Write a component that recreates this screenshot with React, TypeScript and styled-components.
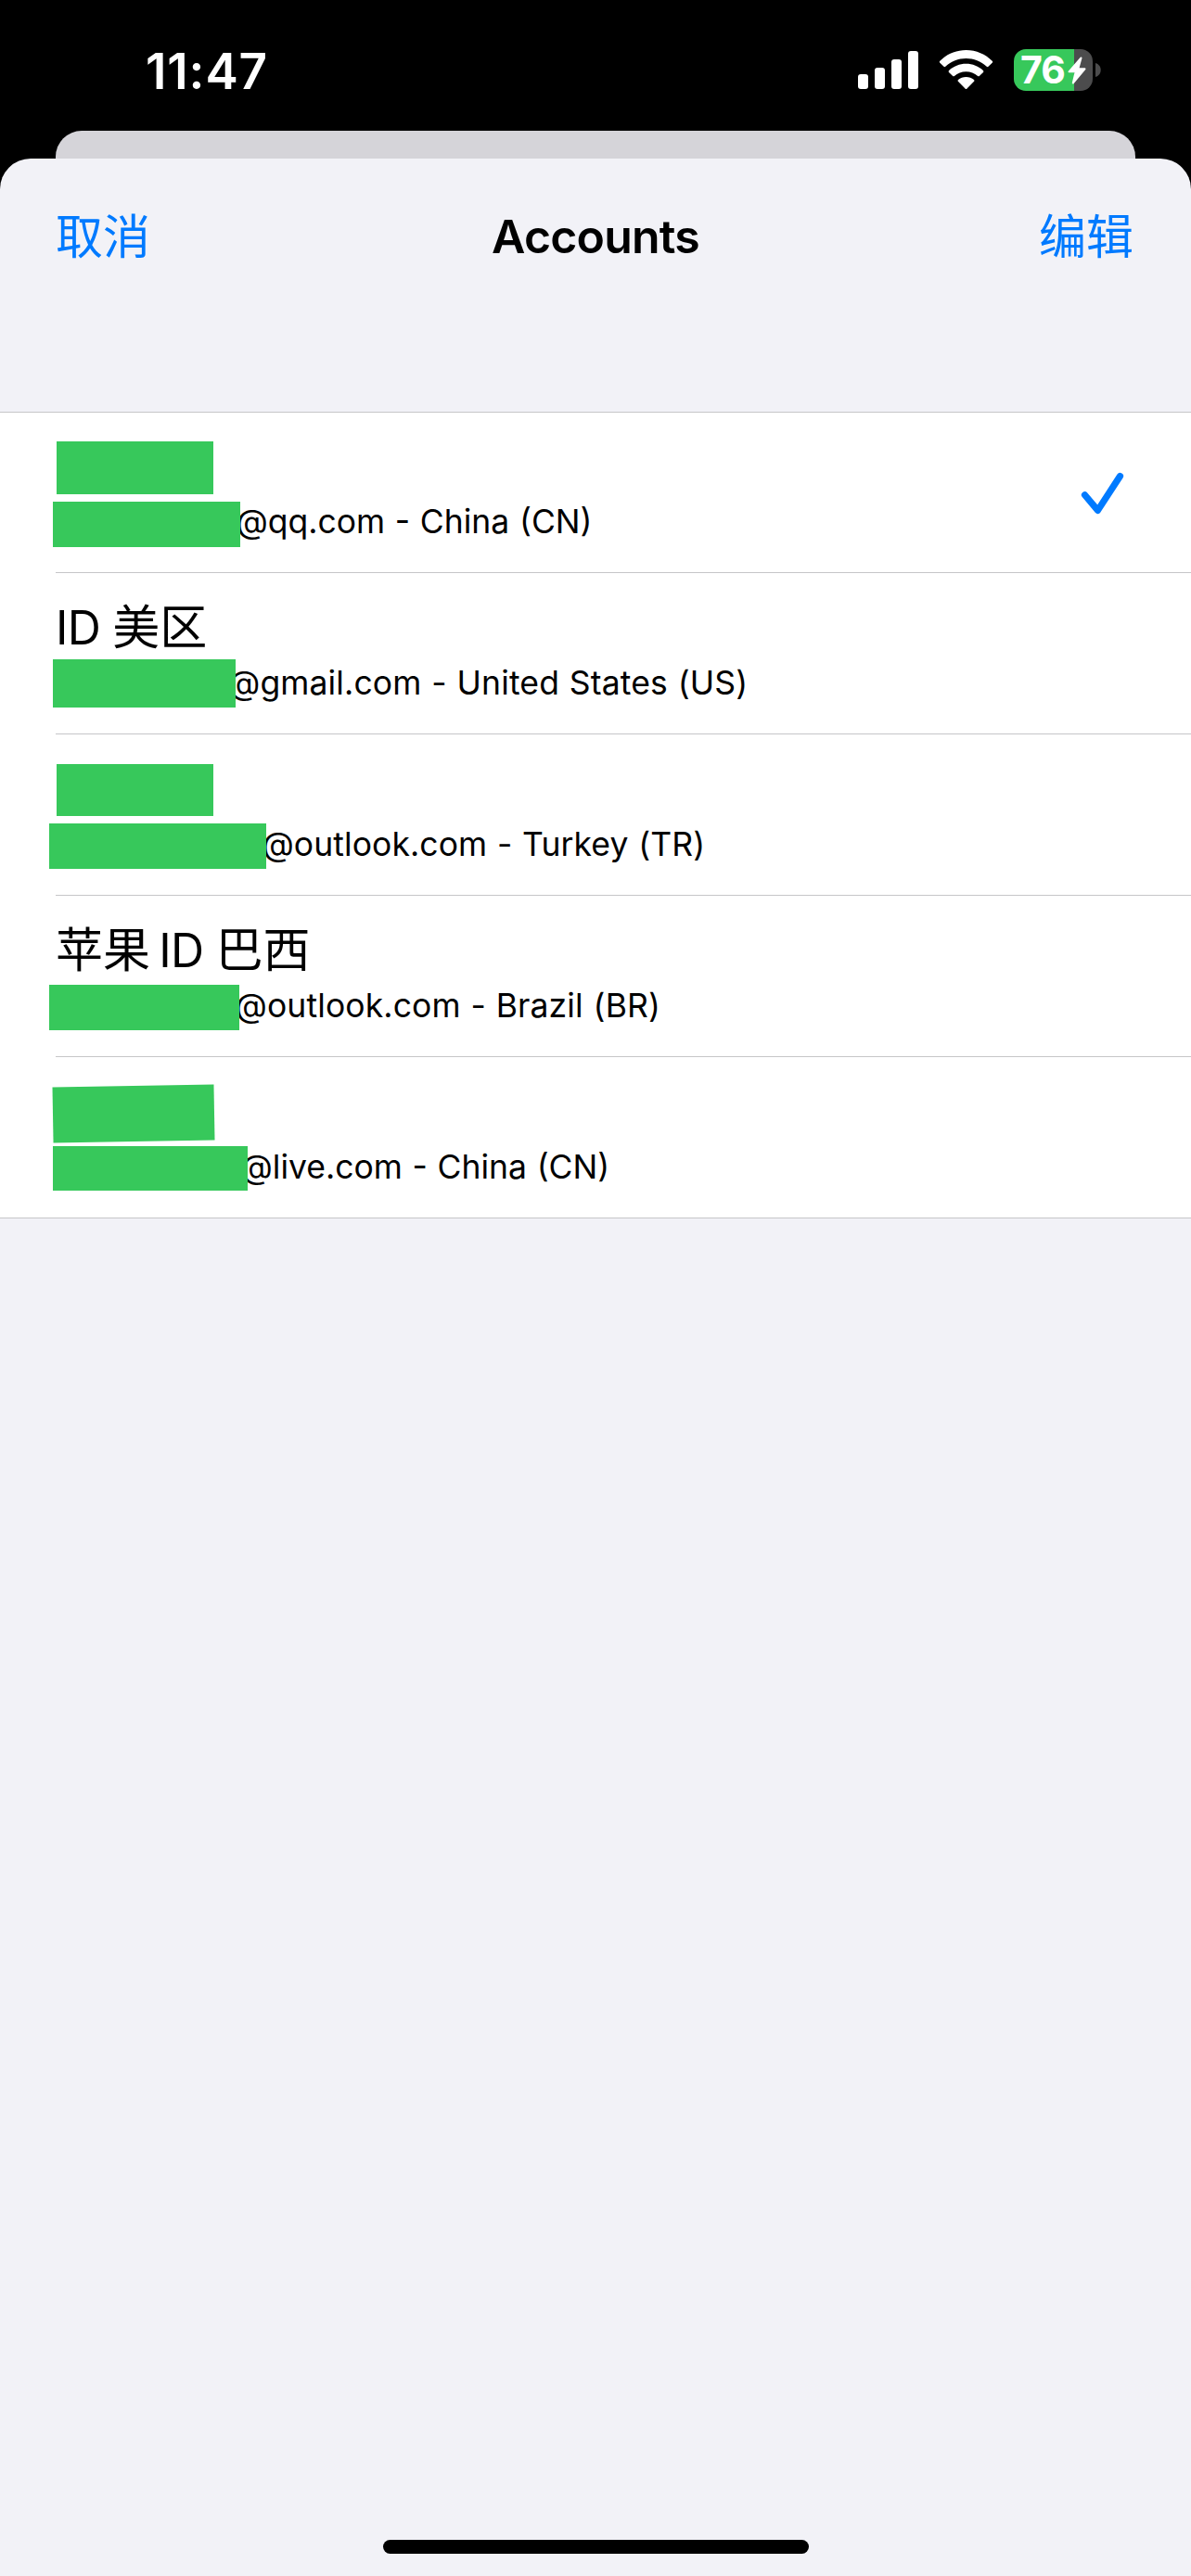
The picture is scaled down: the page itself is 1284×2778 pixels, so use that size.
import React from "react";
import styled, { createGlobalStyle } from "styled-components";

const GlobalStyle = createGlobalStyle`
  *, *::before, *::after { box-sizing: border-box; }
  html, body { margin: 0; padding: 0; background: #000; }
`;

const Screen = styled.div`
  width: 1284px;
  height: 2778px;
  display: flex;
  flex-direction: column;
  overflow: hidden;
  background: #000;
  color: #000;
  font-family: Inter, "Noto Sans CJK SC", sans-serif;
`;

const StatusBar = styled.header`
  flex: none;
  height: 141px;
  padding: 53px 97px 0 157px;
  display: flex;
  justify-content: space-between;
  align-items: flex-start;
  color: #fff;
`;

const Clock = styled.time`
  font-size: 53px;
  line-height: 48px;
  font-weight: 600;
  letter-spacing: 0.9px;
`;

const StatusIcons = styled.div`
  display: flex;
  align-items: flex-start;
  gap: 22px;
`;

const Battery = styled.div`
  display: flex;
  align-items: center;
  gap: 3px;
`;

const BatteryBody = styled.div`
  width: 85px;
  height: 45px;
  padding-left: 7px;
  border-radius: 13px;
  display: flex;
  align-items: center;
  background: linear-gradient(to right, #37c85b 65px, #4c4c4d 65px);
`;

const BatteryLevel = styled.span`
  width: 51px;
  font-size: 41px;
  line-height: 45px;
  font-weight: 700;
  letter-spacing: -1px;
`;

const BackSheet = styled.div`
  flex: none;
  height: 30px;
  margin: 0 60px;
  border-radius: 28px 28px 0 0;
  background: #d5d4d9;
`;

const Sheet = styled.main`
  flex: 1;
  display: flex;
  flex-direction: column;
  border-radius: 33px 33px 0 0;
  background: #f2f2f7;
`;

const NavBar = styled.nav`
  height: 168px;
  margin-bottom: 105px;
  padding: 0 62px 0 60px;
  display: grid;
  grid-template-columns: 1fr auto 1fr;
  align-items: center;
`;

const NavButton = styled.button<{ $end?: boolean }>`
  justify-self: ${(p) => (p.$end ? "end" : "start")};
  padding: 0 0 6px;
  border: 0;
  background: none;
  color: #007aff;
  font: 400 51px/60px "Noto Sans CJK SC", sans-serif;
`;

const Title = styled.h1`
  margin: 0;
  padding-left: 2px;
  font-size: 50px;
  line-height: 60px;
  font-weight: 600;
  letter-spacing: -0.8px;
`;

const List = styled.ul`
  margin: 0;
  padding: 0;
  list-style: none;
  background: #fff;
  border-top: 1px solid #c6c6c8;
  border-bottom: 1px solid #c6c6c8;
`;

const Lines = styled.div`
  display: grid;
  grid-template-rows: 94px 78px;
`;

const Row = styled.li`
  height: 172px;
  display: flex;
  justify-content: space-between;

  &:first-child ${Lines} {
    margin-top: -1px;
  }

  & + & {
    height: 174px;
    border-top: 1px solid transparent;
    background: linear-gradient(#c6c6c8, #c6c6c8) 60px 0 / 100% 1px no-repeat border-box;
  }
`;

const NameLine = styled.div`
  display: flex;
  align-items: flex-start;
`;

const Name = styled.span`
  margin: 29px 0 0 60px;
  font-size: 50px;
  line-height: 60px;
  white-space: pre;
  letter-spacing: -0.8px;
`;

const Han = styled.span<{ $tight?: boolean }>`
  margin-right: ${(p) => (p.$tight ? "-4px" : "0")};
  font-family: "Noto Sans CJK SC", sans-serif;
  font-size: 51px;
  line-height: 0;
  letter-spacing: 0;
`;

const EmailLine = styled.div`
  display: flex;
  align-items: flex-start;
`;

const Mask = styled.span<{ $x: number; $y: number; $w: number; $h: number; $tilt?: number }>`
  flex: none;
  width: ${(p) => p.$w}px;
  height: ${(p) => p.$h}px;
  margin: ${(p) => p.$y}px 0 0 ${(p) => p.$x}px;
  background: #37c85b;
  z-index: 1;
  position: relative;
  ${(p) => (p.$tilt ? `transform: rotate(${p.$tilt}deg);` : "")}
`;

const Email = styled.span<{ $pull: number; $track: number }>`
  margin: 3px 0 0 ${(p) => p.$pull}px;
  font-size: 35.5px;
  line-height: 44px;
  white-space: nowrap;
  letter-spacing: ${(p) => p.$track}px;
  word-spacing: 0.7px;
`;

const CheckIcon = styled.svg`
  flex: none;
  margin: 62px 68px 0 0;
`;

const HomeIndicator = styled.div`
  width: 459px;
  height: 15px;
  margin: auto auto 24px 413px;
  border-radius: 8px;
  background: #000;
`;

type Box = { x: number; y: number; w: number; h: number; tilt?: number };
type Account = {
  name?: React.ReactNode;
  nameMask?: Box;
  emailMask: Box;
  email: string;
  pull: number;
  track: number;
  selected?: boolean;
};

const accounts: Account[] = [
  {
    nameMask: { x: 61, y: 32, w: 169, h: 57 },
    emailMask: { x: 56.5, y: 3, w: 202.5, h: 49 },
    email: "@qq.com - China (CN)",
    pull: -4.5,
    track: 0,
    selected: true,
  },
  {
    name: <>ID <Han>美区</Han></>,
    emailMask: { x: 56.5, y: -1, w: 197.5, h: 52 },
    email: "@gmail.com - United States (US)",
    pull: -8,
    track: 0.13,
  },
  {
    nameMask: { x: 61, y: 32, w: 169, h: 56 },
    emailMask: { x: 52.5, y: 2, w: 234, h: 49 },
    email: "@outlook.com - Turkey (TR)",
    pull: -4,
    track: 0.08,
  },
  {
    name: <><Han $tight>苹果</Han> ID <Han>巴西</Han></>,
    emailMask: { x: 52.5, y: 2, w: 205.5, h: 48.5 },
    email: "@outlook.com - Brazil (BR)",
    pull: -4.5,
    track: 0.12,
  },
  {
    nameMask: { x: 56.5, y: 31, w: 173.5, h: 60, tilt: -1 },
    emailMask: { x: 56.5, y: 1.7, w: 210.5, h: 48 },
    email: "@live.com - China (CN)",
    pull: -7.5,
    track: 0,
  },
];

const Redaction = ({ box }: { box: Box }) => (
  <Mask $x={box.x} $y={box.y} $w={box.w} $h={box.h} $tilt={box.tilt} />
);

const Signal = () => (
  <svg width="65" height="45" viewBox="0 0 65 45" fill="#fff">
    <rect x="0" y="27" width="11" height="16" rx="3" />
    <rect x="18" y="20" width="11" height="23" rx="3" />
    <rect x="36" y="11" width="11" height="32" rx="3" />
    <rect x="54" y="2" width="11" height="41" rx="3" />
  </svg>
);

const Wifi = () => (
  <svg width="59" height="45" viewBox="0 0 59 45" fill="#fff">
    <path d="M29.5 1C40.500 1 50.500 5.500 57.700 12.700Q58.700 13.700 57.700 14.700L53.500 18.800Q52.700 19.600 51.700 18.700C45.500 13 37.800 9.900 29.500 9.900S13.500 13 7.300 18.700Q6.300 19.600 5.500 18.800L1.300 14.700Q.3 13.700 1.300 12.700C8.500 5.500 18.500 1 29.500 1Z" />
    <path d="M29.500 15.700C36.500 15.700 43 18.400 47.900 22.900Q49 23.900 48 24.900L43.800 29Q43 29.700 42.100 28.900C38.600 26 34.300 24.300 29.500 24.300S20.400 26 16.900 28.900Q16 29.700 15.200 29L11 24.900Q10 23.900 11.100 22.900C16 18.400 22.500 15.700 29.500 15.700Z" />
    <path d="M29.500 30C32.700 30 35.700 31.100 38 33Q39 33.900 38.100 34.800L30.500 42.400Q29.500 43.400 28.500 42.400L20.900 34.800Q20 33.900 21 33C23.300 31.100 26.300 30 29.500 30Z" />
  </svg>
);

const Bolt = () => (
  <svg width="20" height="30" viewBox="0 0 20 30">
    <path
      d="M14.500 1.500 1.500 16.300H8.700L5.800 28.500 18.500 13.300H11.300Z"
      fill="#fff"
      stroke="#fff"
      strokeWidth="2"
      strokeLinejoin="round"
    />
  </svg>
);

export default function App() {
  return (
    <>
      <GlobalStyle />
      <Screen>
        <StatusBar>
          <Clock>11:47</Clock>
          <StatusIcons>
            <Signal />
            <Wifi />
            <Battery>
              <BatteryBody>
                <BatteryLevel>76</BatteryLevel>
                <Bolt />
              </BatteryBody>
              <svg width="6" height="15" viewBox="0 0 6 15" fill="#4c4c4d">
                <path d="M0 0C3.500 1 5.700 4 5.700 7.500S3.500 14 0 15Z" />
              </svg>
            </Battery>
          </StatusIcons>
        </StatusBar>
        <BackSheet />
        <Sheet>
          <NavBar>
            <NavButton>取消</NavButton>
            <Title>Accounts</Title>
            <NavButton $end>编辑</NavButton>
          </NavBar>
          <List>
            {accounts.map((account) => (
              <Row key={account.email}>
                <Lines>
                  <NameLine>
                    {account.nameMask && <Redaction box={account.nameMask} />}
                    {account.name && <Name>{account.name}</Name>}
                  </NameLine>
                  <EmailLine>
                    <Redaction box={account.emailMask} />
                    <Email $pull={account.pull} $track={account.track}>{account.email}</Email>
                  </EmailLine>
                </Lines>
                {account.selected && (
                  <CheckIcon width="52" height="52" viewBox="0 0 52 52">
                    <path
                      d="M5.500 26.800 19.500 43.400 43.500 6.500"
                      fill="none"
                      stroke="#007aff"
                      strokeWidth="7.200"
                      strokeLinecap="round"
                      strokeLinejoin="round"
                    />
                  </CheckIcon>
                )}
              </Row>
            ))}
          </List>
          <HomeIndicator />
        </Sheet>
      </Screen>
    </>
  );
}
